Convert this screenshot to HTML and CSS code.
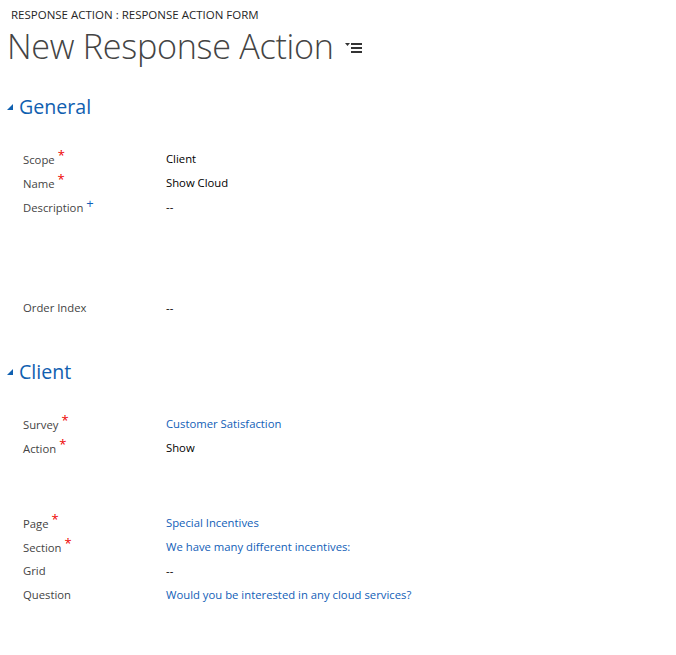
FILE: index.html
```html
<!DOCTYPE html>
<html>
<head>
<meta charset="utf-8">
<link rel="stylesheet" href="styles.css">
</head>
<body>
<div class="crumb">RESPONSE ACTION : RESPONSE ACTION FORM</div>
<div class="title-row">
  <h1 class="title">New Response Action</h1>
  <svg class="menu-icon" width="18" height="12" viewBox="0 0 18 12">
    <path d="M0 1 H5 L2.5 4 Z" fill="#333"/>
    <rect x="6" y="1" width="11" height="2" fill="#333"/>
    <rect x="6" y="5" width="11" height="2" fill="#333"/>
    <rect x="6" y="9" width="11" height="2" fill="#333"/>
  </svg>
</div>

<section class="section section-general">
  <h2 class="sec-head"><span class="tri"></span>General</h2>
  <div class="rows">
    <div class="row"><div class="label">Scope<span class="req">*</span></div><div class="value">Client</div></div>
    <div class="row"><div class="label">Name<span class="req">*</span></div><div class="value">Show Cloud</div></div>
    <div class="row row-tall"><div class="label">Description<span class="rec">+</span></div><div class="value">--</div></div>
    <div class="row"><div class="label">Order Index</div><div class="value">--</div></div>
  </div>
</section>

<section class="section section-client">
  <h2 class="sec-head"><span class="tri"></span>Client</h2>
  <div class="rows">
    <div class="row"><div class="label">Survey<span class="req">*</span></div><div class="value link">Customer Satisfaction</div></div>
    <div class="row row-gap"><div class="label">Action<span class="req">*</span></div><div class="value">Show</div></div>
    <div class="row"><div class="label">Page<span class="req">*</span></div><div class="value link">Special Incentives</div></div>
    <div class="row"><div class="label">Section<span class="req">*</span></div><div class="value link">We have many different incentives:</div></div>
    <div class="row"><div class="label">Grid</div><div class="value">--</div></div>
    <div class="row"><div class="label">Question</div><div class="value link">Would you be interested in any cloud services?</div></div>
  </div>
</section>
</body>
</html>
```
FILE: styles.css
```css
html, body {
  margin: 0;
  padding: 0;
  background: #fff;
}
body {
  font-family: "Open Sans", "Liberation Sans", sans-serif;
  color: #000;
  width: 676px;
  height: 655px;
  overflow: hidden;
}
.crumb {
  padding: 8px 0 0 11px;
  font-size: 11.5px;
  line-height: 14px;
  color: #262626;
}
.title-row {
  display: flex;
  align-items: center;
  padding-left: 7px;
  padding-top: 6px;
  height: 36px;
}
.title {
  margin: 0;
  font-size: 34.2px;
  font-weight: 300;
  line-height: 36px;
  color: #444;
  letter-spacing: -0.3px;
}
.menu-icon {
  margin-left: 11px;
  margin-top: 4px;
}
.section-general {
  margin-top: 27px;
}
.section-client {
  margin-top: 36px;
}
.sec-head {
  margin: 0;
  display: flex;
  align-items: center;
  height: 30px;
  font-size: 19.6px;
  font-weight: 400;
  color: #1060b0;
  padding-left: 7px;
}
.tri {
  width: 0;
  height: 0;
  border-left: 6px solid transparent;
  border-bottom: 6px solid #1060b0;
  margin-right: 6px;
  margin-top: 2px;
}
.rows {
  margin-top: 26px;
  padding-left: 23px;
}
.row {
  display: flex;
  height: 24px;
  font-size: 11.3px;
  line-height: 24px;
}
.row-tall {
  height: 101px;
}
.row-gap {
  height: 75px;
}
.label {
  width: 143px;
  color: #444;
}
.value {
  color: #000;
}
.link {
  color: #1160b7;
}
.req, .rec {
  position: relative;
  top: -4px;
  margin-left: 3px;
  font-size: 13px;
}
.req {
  color: #e00;
}
.rec {
  color: #1160b7;
}
```
